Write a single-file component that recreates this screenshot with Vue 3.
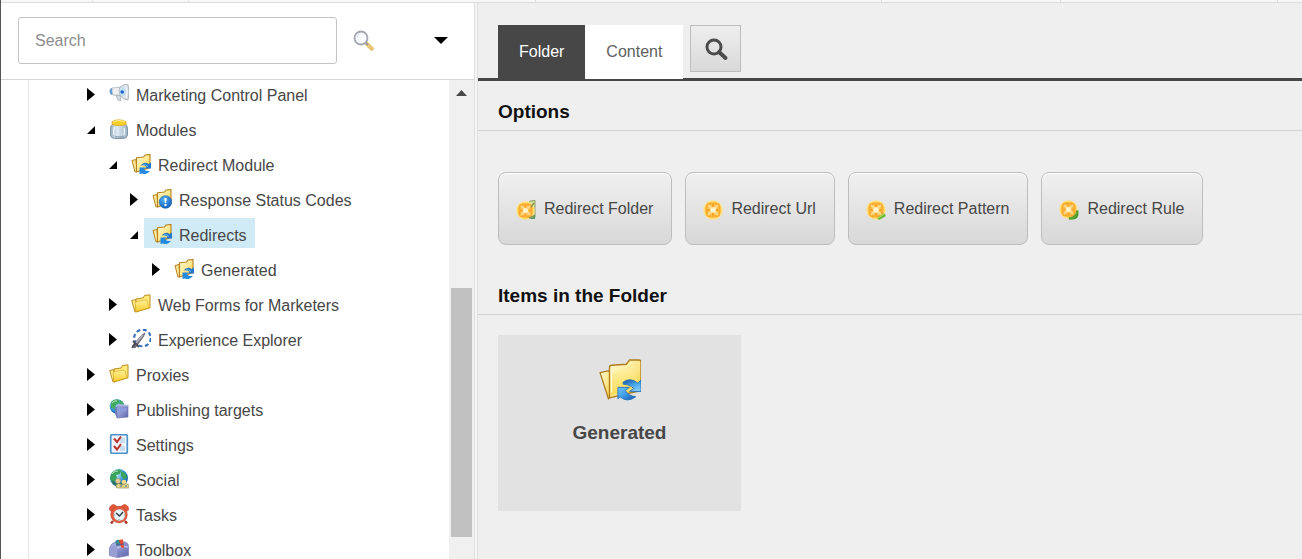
<script setup>
import { ref } from 'vue'

const query = ref('')
const activeTab = ref('Folder')

const nodes = [
  { name: 'Marketing Control Panel', icon: 'megaphone', level: 0 },
  { name: 'Modules', icon: 'jar', level: 0, open: true },
  { name: 'Redirect Module', icon: 'folder-sync', level: 1, open: true },
  { name: 'Response Status Codes', icon: 'folder-alert', level: 2 },
  { name: 'Redirects', icon: 'folder-sync', level: 2, open: true, selected: true },
  { name: 'Generated', icon: 'folder-sync', level: 3 },
  { name: 'Web Forms for Marketers', icon: 'folder', level: 1 },
  { name: 'Experience Explorer', icon: 'wand', level: 1 },
  { name: 'Proxies', icon: 'folder', level: 0 },
  { name: 'Publishing targets', icon: 'targets', level: 0 },
  { name: 'Settings', icon: 'checklist', level: 0 },
  { name: 'Social', icon: 'social', level: 0 },
  { name: 'Tasks', icon: 'clock', level: 0 },
  { name: 'Toolbox', icon: 'toolbox', level: 0 },
]

const options = [
  { name: 'Redirect Folder', icon: 'new-folder' },
  { name: 'Redirect Url', icon: 'new-url' },
  { name: 'Redirect Pattern', icon: 'new-pattern' },
  { name: 'Redirect Rule', icon: 'new-rule' },
]
</script>

<template>
  <svg class="defs" aria-hidden="true">
    <defs>
      <linearGradient id="gold" x1="0" y1="0" x2="1" y2="1">
        <stop offset="0" stop-color="#fffbd6" /><stop offset="0.5" stop-color="#fbe993" /><stop offset="1" stop-color="#f5cb35" />
      </linearGradient>
      <linearGradient id="solid-gold" x1="0" y1="0" x2="0" y2="1">
        <stop offset="0" stop-color="#fff09a" /><stop offset="1" stop-color="#f8cf2e" />
      </linearGradient>
      <linearGradient id="sky" x1="0" y1="0" x2="0.6" y2="1">
        <stop offset="0" stop-color="#1450a0" /><stop offset="0.6" stop-color="#4aa8ee" /><stop offset="1" stop-color="#7cc8fa" />
      </linearGradient>
      <linearGradient id="sky-up" x1="0" y1="0" x2="1" y2="1">
        <stop offset="0" stop-color="#74c6fb" /><stop offset="0.5" stop-color="#3d9ce8" /><stop offset="1" stop-color="#1450a0" />
      </linearGradient>
      <linearGradient id="violet" x1="0" y1="0" x2="1" y2="1">
        <stop offset="0" stop-color="#b9c0ee" /><stop offset="1" stop-color="#5c62aa" />
      </linearGradient>
      <radialGradient id="earth" cx="0.35" cy="0.3" r="0.8">
        <stop offset="0" stop-color="#c6efff" /><stop offset="0.5" stop-color="#3e9ad8" /><stop offset="1" stop-color="#12539a" />
      </radialGradient>
      <radialGradient id="info" cx="0.4" cy="0.3" r="0.8">
        <stop offset="0" stop-color="#58b4f8" /><stop offset="1" stop-color="#0855b8" />
      </radialGradient>
      <radialGradient id="halo">
        <stop offset="0.6" stop-color="#ffd24e" /><stop offset="0.85" stop-color="#ffdf80" /><stop offset="1" stop-color="#ffe9a0" stop-opacity="0" />
      </radialGradient>
      <radialGradient id="spark">
        <stop offset="0" stop-color="#fffdf0" /><stop offset="0.3" stop-color="#ffe09a" /><stop offset="1" stop-color="#fba828" />
      </radialGradient>
      <linearGradient id="glass" x1="0" y1="0" x2="1" y2="0">
        <stop offset="0" stop-color="#9bafbe" /><stop offset="0.4" stop-color="#dcebf5" /><stop offset="1" stop-color="#9db2c5" />
      </linearGradient>
    </defs>

    <symbol id="folder-sync" viewBox="0 0 40 40">
      <path d="M1 13l9-2 1 24-2 3z" fill="url(#gold)" stroke="#ad7e22" stroke-width="1.3" stroke-linejoin="round" />
      <path d="M10 8q0-2 2-2l14-1 3-4h9q2 0 2 2v27l-30 7z" fill="url(#gold)" stroke="#b07c1c" stroke-width="1.3" stroke-linejoin="round" />
      <path d="M11 13l20-3q2 0 2 2l4 13-26 10z" fill="url(#solid-gold)" opacity="0.6" />
      <path d="M12 10v22" stroke="#fffbd8" />
      <path d="M23 22q7-5 14 1l3-3v11H29l4-3q-4-4-10-4z" fill="url(#sky)" stroke="#246eb8" stroke-width="0.8" />
      <path d="M18 27h11l-4 3q3 5 10 6-8 6-15 0l-2 2z" fill="url(#sky-up)" stroke="#246eb8" stroke-width="0.8" />
    </symbol>
    <symbol id="folder-sync-small" viewBox="0 0 20 20">
      <path d="M1 6.5l4-1 1 12-2 .5z" fill="#f9e594" stroke="#bb8523" />
      <path d="M5.500 3.800l7-.8L14 1l5-.5v13L5.500 18z" fill="url(#gold)" stroke="#b9811c" stroke-width="1.100" />
      <path d="M9.500 11.500q4-4.500 8-1.500L20 8.500v6h-6l1.500-2q-3-2-6-1z" fill="#2477cc" />
      <path d="M8.500 13.500h6l-1.500 2q2 2 6 1.500-4 4.500-8 2.500l-2.500.5z" fill="#248ae0" />
      <path d="M12 11q3-1 5 1.500" fill="none" stroke="#6fbaf4" />
    </symbol>
    <symbol id="folder-alert" viewBox="0 0 20 20">
      <path d="M1 6.500l4-1 1 12-2 .5z" fill="#f9e594" stroke="#bb8523" />
      <path d="M5.500 3.800l7-.8L14 1l5-.5v13L5.500 18z" fill="url(#gold)" stroke="#b9811c" stroke-width="1.100" />
      <circle cx="13.500" cy="13" r="6.300" fill="url(#info)" stroke="#2566aa" stroke-width="0.600" />
      <path d="M12.300 9h2.400l-.5 5h-1.400z" fill="#fff" /><circle cx="13.500" cy="16" r="1.200" fill="#fff" />
    </symbol>
    <symbol id="folder" viewBox="0 0 20 20">
      <path d="M.7 6.500l4.300-1 1 12-2 .5z" fill="#ffec8a" stroke="#ba8b22" />
      <path d="M5 5l7-1 1.500-2.500 5.500-.7v13L5 18z" fill="#ffe978" stroke="#bc8b1e" />
      <path d="M4 8l10-2 2 .8 2 7L5 17.500z" fill="url(#solid-gold)" stroke="#dca61c" stroke-width="0.600" />
    </symbol>
    <symbol id="megaphone" viewBox="0 0 20 20">
      <path d="M2 4q-3 3 0 7l2-.5V4.500z" fill="#5e9ede" />
      <path d="M3 4l10-1v9L4 11q-1.500-3-1-7z" fill="#edf0f3" stroke="#a6adb5" stroke-width="0.700" />
      <path d="M7 11l4 .5 1 5-3-.4z" fill="#d5dbe1" stroke="#9da6af" stroke-width="0.700" />
      <path d="M11 3q6-4 8-2.500 2 8 0 15.500-5 0-8-5-2-4 0-8z" fill="#dde2e7" stroke="#9fa7af" stroke-width="0.800" />
      <ellipse cx="14" cy="7.500" rx="3.300" ry="4.500" fill="#c7dff3" /><circle cx="13.200" cy="8" r="1.800" fill="#1768c4" />
      <path d="M17 3q2 5 0 11" fill="none" stroke="#fff" />
    </symbol>
    <symbol id="jar" viewBox="0 0 20 20">
      <path d="M4 5Q1 7 1.500 10v6q.5 3.500 4 3.500h9q3.500 0 4-3.500v-6Q19 7 16 5z" fill="url(#glass)" stroke="#8498a8" />
      <path d="M6 8q-2 2-1 8M15 9q1 3 0 7" fill="none" stroke="#eef7fc" stroke-width="1.300" />
      <path d="M6 18h9" stroke="#6f8498" />
      <path d="M3 2.500Q9.500-1 17 2.500l.2 3Q10 8 3 5.500z" fill="#f9cf27" stroke="#d5a526" stroke-width="0.700" /><path d="M4 2.500q6-2 12 0" fill="none" stroke="#fff09a" />
    </symbol>
    <symbol id="wand" viewBox="0 0 20 20">
      <circle cx="11.500" cy="9" r="8.300" fill="#fff" stroke="#3870b7" stroke-width="2.100" stroke-dasharray="4 2.520" />
      <path d="M1 17L11 6l3-2-1.500 3.500L4 19z" fill="#787787" stroke="#5b5b68" stroke-width="0.800" />
      <path d="M5 14l7-8" stroke="#b9b7c4" stroke-width="1.400" /><path d="M2 12l6 6M1 19l4-5" stroke="#4e4d59" stroke-width="2" />
    </symbol>
    <symbol id="targets" viewBox="0 0 20 20">
      <circle cx="8" cy="7.500" r="7.300" fill="url(#earth)" />
      <path d="M2 3q4-4 8-2l1 3-4 2-1 4-4-1zM11 1q4 2 4 6l-4-1z" fill="#43aa68" /><path d="M3 4q2-3 5-2" stroke="#b3ebb4" fill="none" />
      <path d="M7 8l3-3 10 1-1 3z" fill="#aeb7df" /><path d="M8 8h11v10l-11 1z" fill="url(#violet)" stroke="#606baf" stroke-width="0.600" /><path d="M9 9h8v3q-4 1-8 0z" fill="#8c9be0" />
      <path d="M6 8l2 1v10l-2-4z" fill="#7181b3" />
    </symbol>
    <symbol id="checklist" viewBox="0 0 20 20">
      <rect x="1.700" y="0.700" width="16.600" height="18.600" rx="1.500" fill="#f0f6fc" stroke="#4b91ca" stroke-width="1.700" />
      <path d="M11 4h5v5h-5zM11 12h5v5h-5z" fill="#c8dded" />
      <path d="M5 4.500L8 8l4-5.500M5 12l3 3.500 4-5.500" fill="none" stroke="#b93730" stroke-width="2.100" />
    </symbol>
    <symbol id="social" viewBox="0 0 20 20">
      <circle cx="10" cy="9" r="9" fill="url(#earth)" />
      <path d="M2 5q5-6 10-4l-1 4-4 1 1 3-3 4-4-2zM12 2q6 2 6 7l-3 1-3-3z" fill="#3ba45c" /><path d="M3 5q3-4 6-3" fill="none" stroke="#b4ebb4" />
      <path d="M3 12q5 6 12 2" fill="none" stroke="#2a775d" stroke-width="2" />
      <circle cx="9" cy="12" r="2.500" fill="#e7cf96" stroke="#9b8860" stroke-width="0.500" /><circle cx="15" cy="13" r="2.300" fill="#f5da86" />
      <path d="M7 18q0-4 4-3l2 1q4-3 7 0v3H8z" fill="#e6d583" stroke="#8f9067" stroke-width="0.700" /><path d="M11 17h2M16 17h2" stroke="#4a7895" />
    </symbol>
    <symbol id="clock" viewBox="0 0 20 20">
      <path d="M4 17l-2 2.500M16 17l2 2.500" stroke="#a83928" stroke-width="2.500" />
      <path d="M.5 6Q0 1 5 .5l3 2-5 5zM12 2.500l3-2q5 .5 4.500 5.500L17 7.500z" fill="#e75738" stroke="#c04b32" stroke-width="0.700" />
      <circle cx="10" cy="10.500" r="8.200" fill="#e65c3c" stroke="#c04b32" stroke-width="0.800" /><circle cx="10.400" cy="11" r="6" fill="#e7f5fb" stroke="#b55944" stroke-width="0.500" />
      <path d="M7 9l3.500 3L14 8" fill="none" stroke="#333e48" stroke-width="1.500" /><path d="M10 15v1M5 11h1M15 11h1" stroke="#7797a4" />
    </symbol>
    <symbol id="toolbox" viewBox="0 0 20 20">
      <path d="M.5 9Q2 4 7 3h9q4 1 3.500 7v6.500l-11 2-8-2z" fill="url(#violet)" stroke="#7c80b8" stroke-width="0.800" />
      <path d="M1 8q4-3 7 1v9.500l-7-2z" fill="#9a9fd4" /><path d="M8 9q3-2 11-1" fill="none" stroke="#d9dbf5" />
      <path d="M6 3q1-3 5-2l3 1v4l-6 1z" fill="#3c8e94" /><path d="M10 1l4-.8 1 9-3-1z" fill="#e84c30" /><path d="M7 6l8-1" stroke="#565d97" />
    </symbol>
    <symbol id="new-badge" viewBox="0 0 20 20">
      <circle cx="10" cy="10" r="10.500" fill="url(#halo)" /><rect x="3" y="3" width="14" height="14" rx="4" fill="url(#spark)" stroke="#fbb030" />
      <path d="M5 5l10 10M15 5L5 15" stroke="#ffdc88" stroke-width="1.800" /><path d="M10 4v3M10 13v3M4 10h3M13 10h3" stroke="#f8a524" stroke-width="2" />
      <circle cx="10" cy="10" r="2.500" fill="#fff4d0" />
    </symbol>
    <symbol id="new-url" viewBox="0 0 20 20"><use href="#new-badge" width="20" height="20" /></symbol>
    <symbol id="new-folder" viewBox="0 0 20 20">
      <path d="M12 5l2-4 5-.5v17L8 19z" fill="#d4d99b" stroke="#8a9c62" /><path d="M8 17q6-3 11-2v4H7z" fill="#5c9a72" />
      <use href="#new-badge" x="0" y="1" width="19" height="19" /><path d="M15 7l3-4M13 18l5-2" stroke="#889750" stroke-width="1.400" />
    </symbol>
    <symbol id="new-pattern" viewBox="0 0 20 20">
      <use href="#new-badge" width="20" height="20" /><path d="M11 18l7-5 2 3-7 4z" fill="#69b934" /><path d="M12 18l6-4" stroke="#c8e070" />
    </symbol>
    <symbol id="new-rule" viewBox="0 0 20 20">
      <path d="M18 10q3 4 0 8-5 3-10 0l1-5z" fill="#3d9633" /><use href="#new-badge" width="19" height="19" /><path d="M10 18.500q8-.5 8.500-8" fill="none" stroke="#5ba32a" stroke-width="2.500" />
    </symbol>
  </svg>

  <div class="page">
    <div class="ribbon"><i v-for="n in 6" :key="n"></i></div>
    <div class="workspace">
      <aside class="sidebar">
        <form class="search" role="search" @submit.prevent>
          <input v-model="query" type="search" placeholder="Search" aria-label="Search" />
          <button class="lens" type="submit" aria-label="Run search">
            <svg width="22" height="22" viewBox="0 0 22 22">
              <path d="M13 13l7 7" stroke="#e7c573" stroke-width="4" /><path d="M12 12l3 3" stroke="#9b9b9b" stroke-width="2" />
              <circle cx="8" cy="8" r="6.500" fill="#f8fafc" stroke="#a4a7ae" stroke-width="1.800" /><path d="M4 8q0-4 4-4" fill="none" stroke="#dce8f2" />
            </svg>
          </button>
          <button class="more" type="button" aria-label="Search options">
            <svg width="14" height="8" viewBox="0 0 14 8"><path d="M0 0h14L7 7z" /></svg>
          </button>
        </form>
        <div class="tree-pane">
          <ul class="tree">
            <li v-for="(node, i) in nodes" :key="i" :class="'level-' + node.level">
              <button class="toggle" type="button" :aria-label="(node.open ? 'Collapse ' : 'Expand ') + node.name">
                <svg width="9" height="14" viewBox="0 0 9 14"><path :d="node.open ? 'M8 3v8H0z' : 'M0 0l8 6.500L0 13z'" /></svg>
              </button>
              <a href="#" class="node" :class="{ selected: node.selected }" @click.prevent>
                <svg width="20" height="20"><use :href="'#' + (node.icon === 'folder-sync' ? 'folder-sync-small' : node.icon)" /></svg>
                <span>{{ node.name }}</span>
              </a>
            </li>
          </ul>
          <div class="scrollbar" aria-hidden="true">
            <svg width="11" height="6" viewBox="0 0 11 6"><path d="M0 6h11L5.500 0z" fill="#4a4a4a" /></svg>
            <div class="track"><div class="thumb"></div></div>
          </div>
        </div>
      </aside>
      <div class="splitter"></div>
      <main class="content">
        <nav class="tabs">
          <button v-for="tab in ['Folder', 'Content']" :key="tab" class="tab" :class="{ active: activeTab === tab }" type="button" @click="activeTab = tab">{{ tab }}</button>
          <button class="find" type="button" aria-label="Find">
            <svg width="24" height="24" viewBox="0 0 24 24" fill="none" stroke="#4b4b4b">
              <circle cx="10" cy="10" r="7" stroke-width="3" /><path d="M15 15l6.500 6" stroke-width="4" stroke-linecap="round" />
            </svg>
          </button>
        </nav>
        <h2>Options</h2>
        <div class="options">
          <button v-for="option in options" :key="option.name" type="button">
            <svg width="20" height="20"><use :href="'#' + option.icon" /></svg>
            <span>{{ option.name }}</span>
          </button>
        </div>
        <h2>Items in the Folder</h2>
        <div class="items">
          <a href="#" class="item" @click.prevent>
            <svg width="42" height="42"><use href="#folder-sync" /></svg>
            <strong>Generated</strong>
          </a>
        </div>
      </main>
    </div>
  </div>
</template>

<style>
body { margin: 0; background: #efefef; }
</style>

<style scoped>
.defs { position: absolute; width: 0; height: 0; }
.page {
  display: flex;
  flex-direction: column;
  box-sizing: border-box;
  height: 100vh;
  border-left: 1px solid #555;
  font: 16px/20px "Liberation Sans", Arial, sans-serif;
  color: #474747;
  overflow: hidden;
}
button { font: inherit; color: inherit; border: 0; padding: 0; background: none; cursor: pointer; }
a { color: inherit; text-decoration: none; }
svg { display: block; flex: none; overflow: visible; }
.ribbon { display: grid; grid-template-columns: 92fr 96fr 347fr 347fr 179fr 217fr 24fr; height: 2px; border-bottom: 1px solid #dcdcdc; background: #f7f7f7; }
.ribbon i { border-right: 1px solid #dedede; }
.workspace { display: flex; flex: 1; min-height: 0; }
.sidebar { display: flex; flex-direction: column; width: 473px; flex: none; background: #fff; }
.search { display: flex; align-items: center; padding: 14px 26px 15px 17px; border-bottom: 1px solid #d4d4d4; }
.search input {
  flex: 1;
  min-width: 0;
  box-sizing: border-box;
  height: 47px;
  padding: 0 16px;
  border: 1px solid #c4c4c4;
  border-radius: 3px;
  font: inherit;
  color: #474747;
  appearance: none;
  outline: 0;
}
.search input::placeholder { color: #8d8d8d; opacity: 1; }
.lens { margin: 0 59px 0 16px; }
.tree-pane { display: flex; flex: 1; min-height: 0; overflow: hidden; }
.tree { flex: 1; margin: -2px 0 0 27px; padding: 0 0 0 53px; border-left: 1px solid #e8e8e8; list-style: none; }
.tree li { display: flex; align-items: flex-start; height: 35px; }
.level-1 { padding-left: 22px; }
.level-2 { padding-left: 43px; }
.level-3 { padding-left: 65px; }
.toggle { width: 9px; margin: 10px 5px 0 5px; }
.node { display: flex; align-items: center; gap: 7px; height: 30px; padding: 0 8px; white-space: nowrap; }
.node svg { margin-top: 2px; }
.node span { padding-top: 5px; }
.selected { background: #d0ebf6; }
.scrollbar { display: flex; flex-direction: column; align-items: center; width: 25px; padding-top: 10px; box-sizing: border-box; background: #f0f0f0; }
.track { display: flex; flex-direction: column; flex: 1; width: 21px; padding-top: 12px; }
.track::before { content: ""; flex: 180; }
.track::after { content: ""; flex: 22; }
.thumb { flex: 249; background: #c1c1c1; }
.splitter { width: 2px; border: solid #dfdfdf; border-width: 0 1px; background: #f5f5f5; }
.content { flex: 1; min-width: 0; background: #efefef; }
.tabs { display: flex; align-items: flex-start; height: 53px; padding: 22px 20px 0; border-bottom: 3px solid #474747; }
.tab { height: 54px; padding: 0 21px; background: #fff; color: #606060; }
.find { display: grid; place-items: center; box-sizing: border-box; width: 51px; height: 47px; margin-left: 7px; border: 1px solid #bdbdbd; background: linear-gradient(#eee, #d9d9d9); }
.tab.active { background: #474747; color: #fff; }
h2 { margin: 0; padding: 19px 20px 6px; border-bottom: 1px solid #d3d3d3; font-size: 19px; line-height: 24px; color: #111; }
.options { display: flex; flex-wrap: wrap; gap: 13px; padding: 41px 20px 20px; }
.options button {
  display: flex;
  align-items: center;
  gap: 8px;
  box-sizing: border-box;
  height: 73px;
  padding: 0 18px 0 17px;
  border: 1px solid #bdbdbd;
  border-radius: 8px;
  background: linear-gradient(#f0f0f0, #d8d8d8);
  box-shadow: inset 0 1px #fff;
}
.options svg { margin-top: 3px; }
.items { display: flex; padding: 20px; }
.item { display: flex; flex-direction: column; align-items: center; gap: 20px; box-sizing: border-box; width: 243px; min-height: 176px; padding-top: 24px; background: #e2e2e2; }
.item strong { font-size: 19px; line-height: 24px; }
</style>
